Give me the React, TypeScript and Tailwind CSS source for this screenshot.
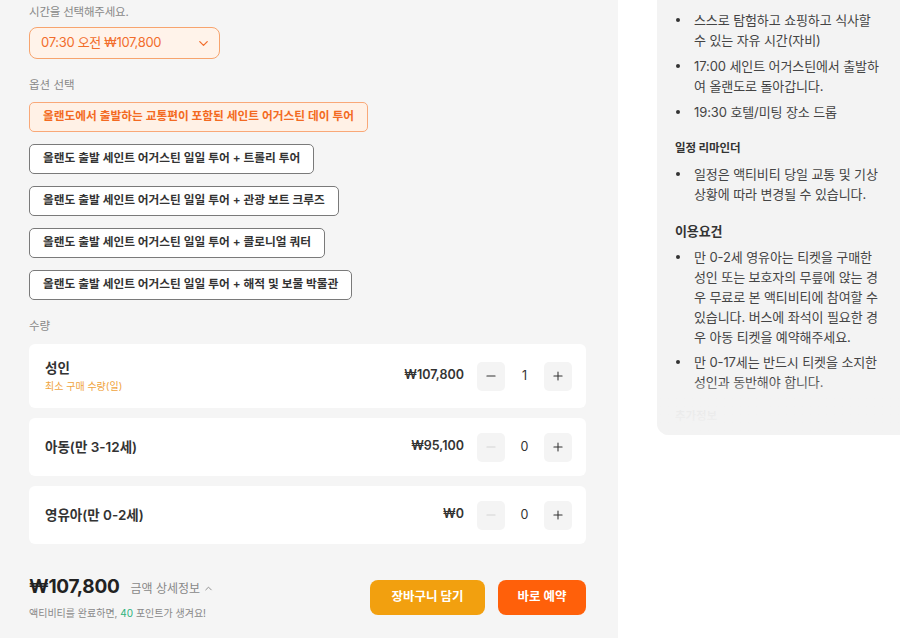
import { ChevronDown, ChevronUp, Minus, Plus } from "lucide-react";

const options = [
  "올랜도에서 출발하는 교통편이 포함된 세인트 어거스틴 데이 투어",
  "올랜도 출발 세인트 어거스틴 일일 투어 + 트롤리 투어",
  "올랜도 출발 세인트 어거스틴 일일 투어 + 관광 보트 크루즈",
  "올랜도 출발 세인트 어거스틴 일일 투어 + 콜로니얼 쿼터",
  "올랜도 출발 세인트 어거스틴 일일 투어 + 해적 및 보물 박물관",
];

type Row = { label: string; sub?: string; price: string; count: number };
const rows: Row[] = [
  { label: "성인", sub: "최소 구매 수량(일)", price: "₩107,800", count: 1 },
  { label: "아동(만 3-12세)", price: "₩95,100", count: 0 },
  { label: "영유아(만 0-2세)", price: "₩0", count: 0 },
];

function Bullet({ lines }: { lines: string[] }) {
  return (
    <li className="flex">
      <span className="w-[19px] shrink-0 flex justify-start pl-[1px] pt-[8px]">
        <span className="block w-[4px] h-[4px] rounded-full bg-[#333]" />
      </span>
      <span className="block">
        {lines.map((l, i) => (
          <span key={i} className="block whitespace-nowrap">
            {l}
          </span>
        ))}
      </span>
    </li>
  );
}

export default function App() {
  return (
    <div className="w-[900px] h-[638px] overflow-hidden bg-white flex font-['Inter','Noto_Sans_CJK_KR',sans-serif] text-[#333]">
      {/* Left panel */}
      <div className="w-[618px] shrink-0 h-full bg-[#f5f5f5] pl-[29px] pr-[32px] pt-[3px] flex flex-col">
        <div className="text-[11.5px] leading-[18px] text-[#888] tracking-[-0.2px]">시간을 선택해주세요.</div>
        <div className="mt-[6px] w-[191px] h-[32px] rounded-[8px] border border-[#f7a46e] bg-[#fff3ea] flex items-center justify-between pl-[11px] pr-[8px]">
          <span className="text-[13px] text-[#f26d2c] tracking-[-0.3px]">07:30 오전 ₩107,800</span>
          <ChevronDown size={15} strokeWidth={2} className="text-[#f26d2c]" />
        </div>

        <div className="mt-[17px] text-[11.5px] leading-[18px] text-[#888]">옵션 선택</div>
        <div className="mt-[8px] flex flex-col items-start gap-[12px]">
          {options.map((o, i) => (
            <div
              key={i}
              className={
                i === 0
                  ? "h-[30px] flex items-center px-[13px] rounded-[5px] border border-[#f9a878] bg-[#fff1e6] text-[#f36a22] text-[11.7px] font-semibold"
                  : "h-[30px] flex items-center px-[13px] rounded-[5px] border border-[#7a7a7a] bg-white text-[#333] text-[11.7px] font-semibold"
              }
            >
              {o}
            </div>
          ))}
        </div>

        <div className="mt-[17px] text-[11.5px] leading-[18px] text-[#888]">수량</div>
        <div className="mt-[9px] flex flex-col gap-[10px]">
          {rows.map((r, i) => (
            <div
              key={i}
              className={
                (i === 0 ? "h-[64px] " : "h-[58px] ") +
                "bg-white rounded-[6px] flex items-center justify-between pl-[16px] pr-[14px]"
              }
            >
              <div className="flex flex-col">
                <span className="text-[13.5px] leading-[20px] font-semibold text-[#333]">{r.label}</span>
                {r.sub && (
                  <span className="text-[10px] leading-[16px] text-[#f0a440]">{r.sub}</span>
                )}
              </div>
              <div className="flex items-center">
                <span className="text-[12.5px] font-semibold text-[#333] mr-[13px] -mt-[2px]">{r.price}</span>
                <div className="w-[28px] h-[29px] rounded-[5px] bg-[#f4f4f4] flex items-center justify-center">
                  <Minus
                    size={14}
                    strokeWidth={1.8}
                    className={r.count > 0 ? "text-[#333]" : "text-[#d4d4d4]"}
                  />
                </div>
                <span className="w-[39px] text-center text-[12.5px] text-[#333]">{r.count}</span>
                <div className="w-[28px] h-[29px] rounded-[5px] bg-[#f4f4f4] flex items-center justify-center">
                  <Plus size={14} strokeWidth={1.8} className="text-[#333]" />
                </div>
              </div>
            </div>
          ))}
        </div>

        <div className="mt-[29px] flex items-center justify-between">
          <div className="flex flex-col">
            <div className="flex items-baseline">
              <span className="text-[19px] leading-[28px] font-bold text-[#222] tracking-[-0.3px]">₩107,800</span>
              <span className="ml-[11px] text-[12px] text-[#888]">금액 상세정보</span>
              <ChevronUp size={11} strokeWidth={2} className="ml-[3px] text-[#888] self-center mt-[2px]" />
            </div>
            <div className="mt-[4px] text-[10px] leading-[16px] text-[#888]">
              액티비티를 완료하면, <span className="text-[#2db37c]">40</span> 포인트가 생겨요!
            </div>
          </div>
          <div className="flex items-center gap-[13px]">
            <button className="w-[115px] h-[35px] rounded-[8px] bg-[#f2a00f] text-white text-[12.5px] font-bold">
              장바구니 담기
            </button>
            <button className="w-[88px] h-[35px] rounded-[8px] bg-[#ff600a] text-white text-[12.5px] font-bold">
              바로 예약
            </button>
          </div>
        </div>
      </div>

      {/* Right panel */}
      <div className="ml-[39px] w-[243px] h-[435px] shrink-0 bg-[#f3f3f3] rounded-bl-[12px] relative overflow-hidden pl-[18px] pt-[10px] text-[13px] leading-[20px] text-[#444] tracking-[-0.1px]">
        <ul className="flex flex-col gap-[6px]">
          <Bullet lines={["스스로 탐험하고 쇼핑하고 식사할", "수 있는 자유 시간(자비)"]} />
          <Bullet lines={["17:00 세인트 어거스틴에서 출발하", "여 올랜도로 돌아갑니다."]} />
          <Bullet lines={["19:30 호텔/미팅 장소 드롭"]} />
        </ul>
        <div className="mt-[16px] text-[11.5px] font-bold text-[#333]">일정 리마인더</div>
        <ul className="mt-[6px] flex flex-col gap-[6px]">
          <Bullet lines={["일정은 액티비티 당일 교통 및 기상", "상황에 따라 변경될 수 있습니다."]} />
        </ul>
        <div className="mt-[17px] text-[13px] font-bold text-[#333]">이용요건</div>
        <ul className="mt-[6px] flex flex-col gap-[5px]">
          <Bullet
            lines={[
              "만 0-2세 영유아는 티켓을 구매한",
              "성인 또는 보호자의 무릎에 앉는 경",
              "우 무료로 본 액티비티에 참여할 수",
              "있습니다. 버스에 좌석이 필요한 경",
              "우 아동 티켓을 예약해주세요.",
            ]}
          />
          <Bullet lines={["만 0-17세는 반드시 티켓을 소지한", "성인과 동반해야 합니다."]} />
        </ul>
        <div className="mt-[14px] text-[11.5px] font-bold text-[#333]">추가정보</div>
        <div className="absolute left-0 right-0 bottom-0 h-[56px] bg-gradient-to-b from-[#f3f3f3]/0 via-[#f3f3f3]/95 to-[#f3f3f3]" />
      </div>
    </div>
  );
}
